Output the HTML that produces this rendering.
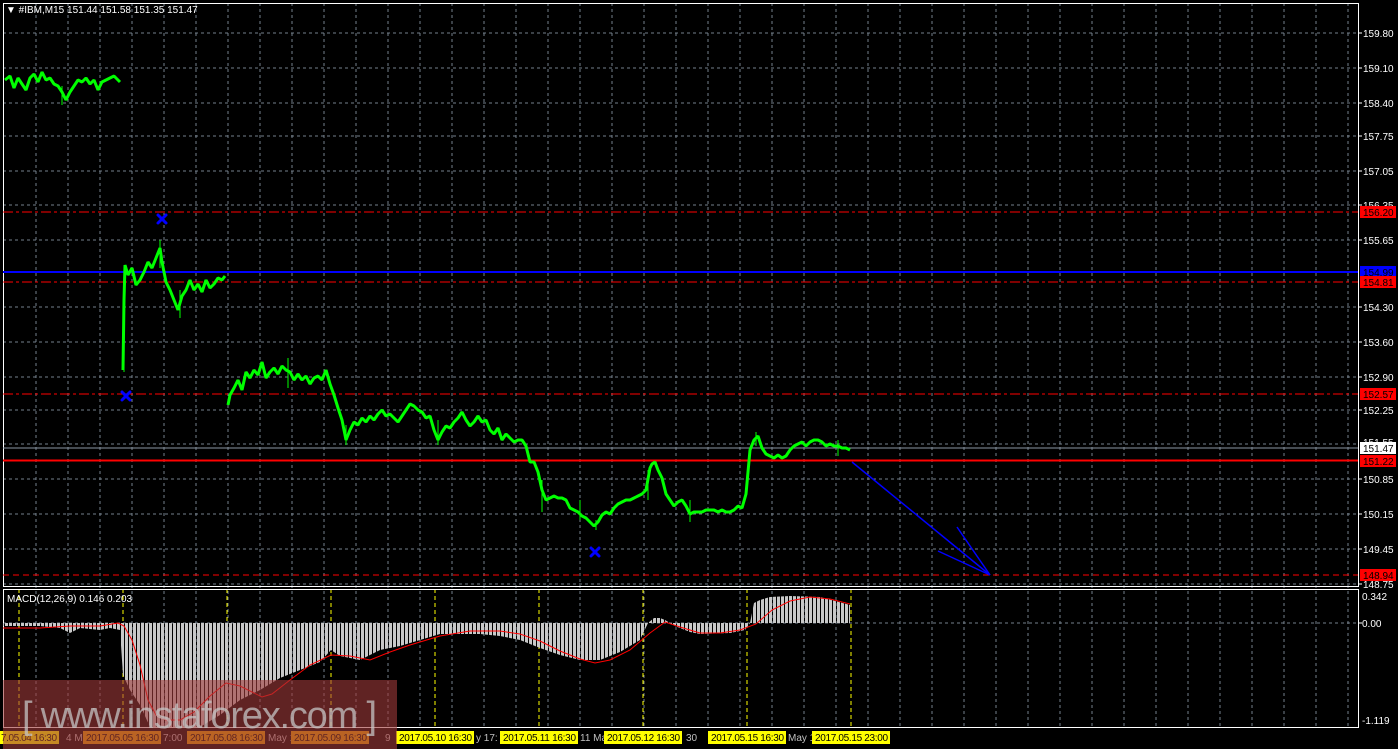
<!DOCTYPE html>
<html><head><meta charset="utf-8"><style>
html,body{margin:0;padding:0;background:#000;}
body{width:1398px;height:749px;overflow:hidden;position:relative;font-family:"Liberation Sans",sans-serif;}
svg{position:absolute;left:0;top:0;}
text{font-family:"Liberation Sans",sans-serif;}
</style></head><body>
<svg width="1398" height="749" viewBox="0 0 1398 749">
<defs>
<pattern id="bars" width="4" height="10" patternUnits="userSpaceOnUse" x="1">
<rect x="0" y="0" width="3" height="10" fill="#c8c8c8"/>
</pattern>
</defs>
<rect width="1398" height="749" fill="#000"/>
<g stroke="#75818d" stroke-width="1" stroke-dasharray="3,3">
<path d="M36 3V727M68 3V727M100 3V727M132 3V727M164 3V727M196 3V727M228 3V727M260 3V727M292 3V727M324 3V727M356 3V727M388 3V727M420 3V727M452 3V727M484 3V727M516 3V727M548 3V727M580 3V727M612 3V727M644 3V727M676 3V727M708 3V727M740 3V727M772 3V727M804 3V727M836 3V727M868 3V727M900 3V727M932 3V727M964 3V727M996 3V727M1028 3V727M1060 3V727M1092 3V727M1124 3V727M1156 3V727M1188 3V727M1220 3V727M1252 3V727M1284 3V727M1316 3V727M1348 3V727"/>
<path d="M3 33H1358M3 68H1358M3 103H1358M3 136H1358M3 171H1358M3 205H1358M3 240H1358M3 307H1358M3 342H1358M3 377H1358M3 410H1358M3 444H1358M3 479H1358M3 514H1358M3 549H1358M3 584H1358M3 623H1358"/>
</g>
<g stroke="#ffff00" stroke-width="1" stroke-dasharray="4,3">
<path d="M19 589V727M123 589V727M227 589V727M331 589V727M435 589V727M539 589V727M643 589V727M747 589V727M851 589V727"/>
</g>
<g fill="none" stroke="#fff" stroke-width="1">
<rect x="3.5" y="3.5" width="1355" height="583"/>
<rect x="3.5" y="589.5" width="1355" height="138"/>
</g>
<path d="M3 212H1358" stroke="#ff0000" stroke-width="1" stroke-dasharray="10,3,3,3"/>
<path d="M3 282H1358" stroke="#ff0000" stroke-width="1" stroke-dasharray="10,3,3,3"/>
<path d="M3 394H1358" stroke="#ff0000" stroke-width="1" stroke-dasharray="10,3,3,3"/>
<path d="M3 575H1358" stroke="#ff0000" stroke-width="1" stroke-dasharray="6,4"/>
<path d="M3 272H1358" stroke="#0000ff" stroke-width="2"/>
<path d="M3 448H1358" stroke="#8a96a3" stroke-width="1"/>
<path d="M3 460.5H1358" stroke="#ff0000" stroke-width="2"/>
<g fill="none" stroke="#00ff00" stroke-linejoin="bevel">
<path stroke-width="3" d="M5 80L10 76 14 88 18 78 22 84 26 90 30 78 34 74 38 82 42 72 46 80 50 78 54 84 58 86 62 92 66 100 70 92 74 86 78 80 82 82 86 78 90 84 94 80 98 90 102 82 106 80 110 78 114 76 118 80 120 82"/>
<path stroke-width="3" d="M123 370L124 300 125 265 128 275 132 268 136 285 140 280 144 272 148 262 152 268 156 258 160 248 162 262 166 282 170 290 174 300 178 310 182 296 186 290 190 280 194 290 198 284 202 292 206 280 210 288 214 284 218 278 222 280 225 276"/>
<path stroke-width="3" d="M228 405L230 395 234 388 238 380 242 390 246 372 250 378 254 370 258 375 262 362 266 378 270 372 274 368 278 374 282 366 286 370 290 372 294 380 298 374 302 380 306 376 310 384 314 378 318 376 322 380 326 370 330 384 334 395 338 408 342 420 346 440 350 430 354 422 358 425 362 418 366 422 370 416 374 420 378 414 382 410 386 416 390 414 394 418 398 422 402 416 406 410 410 404 414 406 418 410 422 412 426 418 430 416 434 430 438 440 442 432 446 426 450 428 454 422 458 418 462 412 466 420 470 426 474 422 478 416 482 422 486 420 490 430 494 434 498 428 502 440 506 434 510 438 514 442 518 440 522 440 526 446 530 462 534 462 538 472 542 490 546 500 550 498 554 496 558 498 562 498 566 500 570 508 574 510 578 512 582 516 586 518 590 522 594 526 598 522 602 515 606 512 610 514 614 508 618 504 622 502 626 500 630 500 634 498 638 496 642 494 646 490 650 468 652 464 655 462 658 470 662 478 666 494 670 500 674 506 678 502 682 500 686 506 690 514 694 512 698 512 702 512 706 510 710 510 714 510 718 512 722 510 726 512 730 512 734 510 738 506 742 508 746 494 750 450 754 440 758 436 762 448 766 454 770 456 774 458 778 455 782 458 786 456 790 450 794 446 798 444 802 442 806 446 810 442 814 440 818 440 822 442 826 446 830 444 834 446 838 446 842 448 846 448 850 450"/>
</g>
<g stroke="#00ff00" stroke-width="1">
<path d="M62 86V105M124 280V372M160 240V268M180 290V318M288 358V388M346 425V445M438 420V445M542 480V512M580 500V520M596 520V530M648 470V500M690 500V522M756 432V446M838 440V456"/>
</g>
<g stroke="#0000ff" stroke-width="3" stroke-linecap="round">
<path d="M158 215L166 223M166 215L158 223"/>
<path d="M122 392L130 400M130 392L122 400"/>
<path d="M591 548L599 556M599 548L591 556"/>
</g>
<g stroke="#0000ff" stroke-width="1.5" fill="none">
<path d="M852 462L990 575"/>
<path d="M990 575L938 551M990 575L957 527"/>
</g>
<path fill="url(#bars)" d="M3 623H850V623 L850 623 850 605 820 597 790 596 770 597 760 600 754 603 750 623 745 630 730 633 700 634 690 632 675 626 665 620 660 618 654 618 648 623 640 640 620 652 600 660 580 660 560 655 540 648 520 640 500 636 480 634 440 634 420 640 400 646 380 650 360 660 340 656 331 650 320 662 300 670 280 678 260 690 240 700 220 715 200 727 150 727 140 705 130 690 123 675 120 630 110 628 100 630 80 628 70 633 60 628 40 626 20 626 3 626Z"/>
<path fill="none" stroke="#ff0000" stroke-width="1" d="M3 628L40 628 70 626 100 626 118 623 124 626 132 640 140 665 148 700 156 715 166 720 180 720 194 712 210 696 226 683 240 686 252 692 262 697 272 694 290 680 310 665 331 655 350 656 370 660 390 652 410 645 440 636 470 631 500 631 520 634 540 641 560 651 580 659 595 663 610 660 630 650 650 633 665 622 680 627 700 633 720 633 740 630 756 624 772 610 790 601 810 597 830 599 850 604"/>
<text x="7" y="602" fill="#fff" font-size="10">MACD(12,26,9) 0.146 0.203</text>
<text x="6" y="13" fill="#fff" font-size="10">▼ #IBM,M15  151.44 151.58 151.35 151.47</text>
<g fill="#fff" font-size="10">
<text x="1363" y="37">159.80</text><text x="1363" y="72">159.10</text><text x="1363" y="107">158.40</text>
<text x="1363" y="140">157.75</text><text x="1363" y="175">157.05</text><text x="1363" y="209">156.35</text>
<text x="1363" y="244">155.65</text><text x="1363" y="311">154.30</text><text x="1363" y="346">153.60</text>
<text x="1363" y="381">152.90</text><text x="1363" y="414">152.25</text><text x="1363" y="446">151.55</text>
<text x="1363" y="483">150.85</text><text x="1363" y="518">150.15</text><text x="1363" y="553">149.45</text>
<text x="1363" y="588">148.75</text><text x="1362" y="600">0.342</text><text x="1362" y="627">0.00</text>
<text x="1362" y="724">-1.119</text>
</g>
<g stroke="#fff"><path d="M1358 33h4M1358 68h4M1358 103h4M1358 136h4M1358 171h4M1358 205h4M1358 240h4M1358 307h4M1358 342h4M1358 377h4M1358 410h4M1358 479h4M1358 514h4M1358 549h4M1358 584h4M1358 623h4"/></g>
<rect x="1360" y="206" width="36" height="12" fill="#ff0000"/><text x="1363" y="216" font-size="10" fill="#000">156.20</text>
<rect x="1360" y="266" width="36" height="12" fill="#0000ff"/><text x="1363" y="276" font-size="10" fill="#000">154.99</text>
<rect x="1360" y="276" width="36" height="12" fill="#ff0000"/><text x="1363" y="286" font-size="10" fill="#000">154.81</text>
<rect x="1360" y="388" width="36" height="12" fill="#ff0000"/><text x="1363" y="398" font-size="10" fill="#000">152.57</text>
<rect x="1360" y="442" width="36" height="12" fill="#fff"/><text x="1363" y="452" font-size="10" fill="#000">151.47</text>
<rect x="1360" y="455" width="36" height="12" fill="#ff0000"/><text x="1363" y="465" font-size="10" fill="#000">151.22</text>
<rect x="1360" y="569" width="36" height="12" fill="#ff0000"/><text x="1363" y="579" font-size="10" fill="#000">148.94</text>
<path d="M3 727.5H1358" stroke="#fff"/>
<g font-size="10">
<rect x="0" y="731" width="59" height="13" fill="#ffff00"/><text x="1" y="741" fill="#000" textLength="56">7.05.04 16:30</text>
<text x="66" y="741" fill="#c0c0c0">4 M</text>
<rect x="83" y="731" width="78" height="13" fill="#e0a000"/><text x="86" y="741" fill="#000" textLength="73">2017.05.05 16:30</text>
<text x="163" y="741" fill="#c0c0c0">7:00</text>
<rect x="187" y="731" width="78" height="13" fill="#e0a000"/><text x="190" y="741" fill="#000" textLength="73">2017.05.08 16:30</text>
<text x="268" y="741" fill="#c0c0c0">May 1</text>
<rect x="291" y="731" width="78" height="13" fill="#e0a000"/><text x="294" y="741" fill="#000" textLength="73">2017.05.09 16:30</text>
<text x="385" y="741" fill="#c0c0c0">9</text>
<rect x="396" y="731" width="78" height="13" fill="#ffff00"/><text x="399" y="741" fill="#000" textLength="73">2017.05.10 16:30</text>
<text x="476" y="741" fill="#c0c0c0">y 17:</text>
<rect x="500" y="731" width="78" height="13" fill="#ffff00"/><text x="503" y="741" fill="#000" textLength="73">2017.05.11 16:30</text>
<text x="580" y="741" fill="#c0c0c0">11 Ma</text>
<rect x="604" y="731" width="78" height="13" fill="#ffff00"/><text x="607" y="741" fill="#000" textLength="73">2017.05.12 16:30</text>
<text x="686" y="741" fill="#c0c0c0">30</text>
<rect x="708" y="731" width="78" height="13" fill="#ffff00"/><text x="711" y="741" fill="#000" textLength="73">2017.05.15 16:30</text>
<text x="788" y="741" fill="#c0c0c0">May 1</text>
<rect x="812" y="731" width="78" height="13" fill="#ffff00"/><text x="815" y="741" fill="#000" textLength="73">2017.05.15 23:00</text>
</g>
<rect x="3" y="680" width="394" height="69" fill="#a03a3a" fill-opacity="0.6"/>
<text x="22" y="728" fill="#c4c4c4" fill-opacity="0.75" font-size="38" textLength="355">[ www.instaforex.com ]</text>
</svg>
</body></html>
